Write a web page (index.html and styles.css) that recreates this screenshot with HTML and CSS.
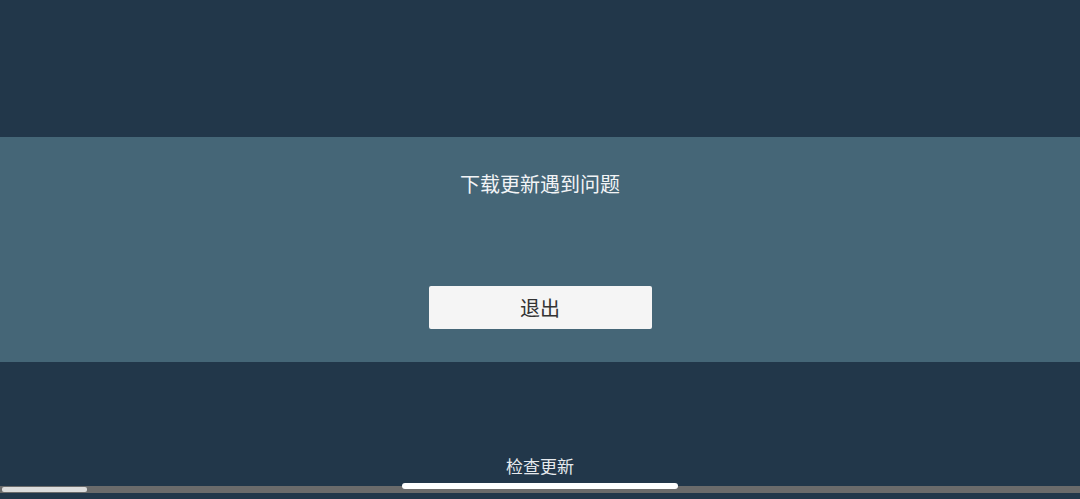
FILE: index.html
```html
<!DOCTYPE html>
<html lang="zh">
<head>
<meta charset="utf-8">
<link rel="stylesheet" href="styles.css">
</head>
<body>
<div class="screen">
  <div class="top"></div>
  <div class="panel">
    <div class="title">下载更新遇到问题</div>
    <button class="exit">退出</button>
  </div>
  <div class="bottom">
    <div class="check">检查更新</div>
    <div class="progress"><div class="fill" style="width: 85px"></div></div>
  </div>
  <div class="home"></div>
</div>
</body>
</html>
```
FILE: styles.css
```css
* { box-sizing: border-box; }
html, body { margin: 0; padding: 0; }
body {
  width: 1080px;
  height: 499px;
  overflow: hidden;
  background: #22374a;
  font-family: "Noto Sans CJK SC", "Noto Sans", sans-serif;
}
.screen {
  position: relative;
  width: 1080px;
  height: 499px;
  display: flex;
  flex-direction: column;
}
.top { height: 137px; flex: none; }
.panel {
  height: 225px;
  flex: none;
  background: #456677;
  display: flex;
  flex-direction: column;
  align-items: center;
  padding-top: 34px;
}
.title {
  color: #f2f4f6;
  font-size: 20px;
  line-height: 26px;
  height: 26px;
}
.exit {
  margin-top: 89px;
  width: 223px;
  height: 43px;
  background: #f5f5f5;
  border: none;
  border-radius: 2px;
  color: #333;
  font-family: inherit;
  font-size: 20px;
  line-height: 26px;
  padding: 0;
}
.bottom {
  flex: 1;
  display: flex;
  flex-direction: column;
  align-items: center;
  justify-content: flex-end;
  padding-bottom: 6px;
}
.check {
  color: #e6eaee;
  font-size: 17px;
  line-height: 22px;
  margin-bottom: 9px;
}
.progress {
  width: 1080px;
  height: 7px;
  background: #6b6b6b;
  padding: 1px 2px;
}
.fill {
  height: 5px;
  background: #dcdcdc;
  border-radius: 2px;
}
.home {
  position: absolute;
  left: 402px;
  top: 483px;
  width: 276px;
  height: 6px;
  background: #ffffff;
  border-radius: 3px;
}
```
